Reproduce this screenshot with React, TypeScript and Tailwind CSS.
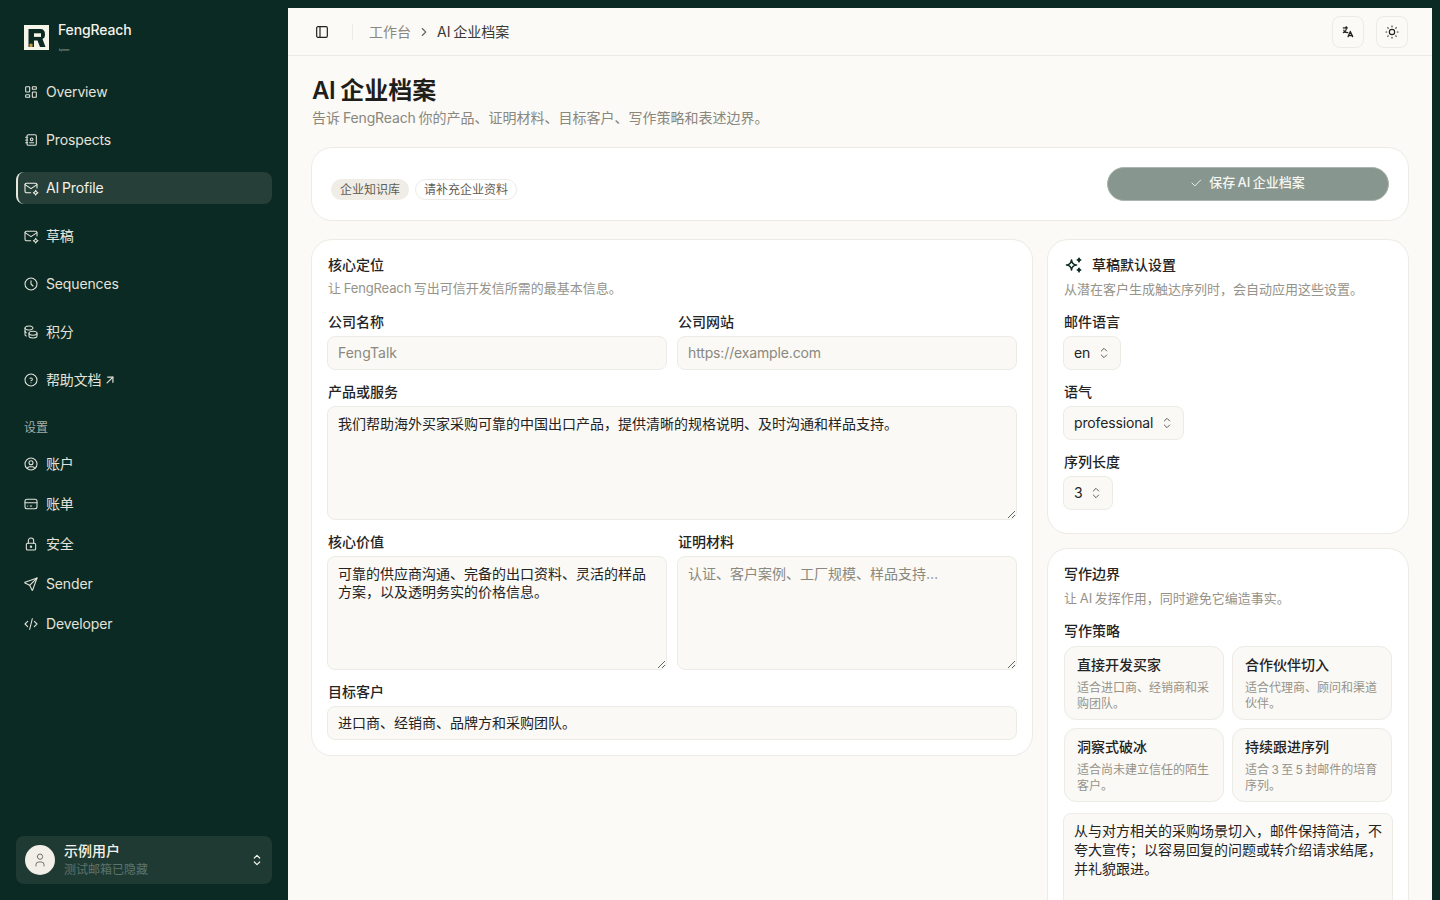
import React from "react";
import {
  TbLayoutDashboard, TbAddressBook, TbMailSpark, TbClock, TbCoins, TbHelpCircle, TbUserCircle,
  TbCreditCard, TbLock, TbSend, TbCode, TbLayoutSidebar, TbLanguage, TbSun, TbCheck, TbSparkles,
  TbSelector, TbUser, TbChevronRight, TbArrowUpRight,
} from "react-icons/tb";

const FONT = "font-['Inter','Noto_Sans_CJK_SC',sans-serif]";

function NavItem({ icon: Icon, label, active, extra }: { icon: any; label: string; active?: boolean; extra?: React.ReactNode }) {
  return (
    <div className={active
      ? "flex h-8 items-center gap-[7px] rounded-lg border-l-2 border-[#e8e6dd] bg-[#263f38] pl-[5px] text-sm text-[#f4f2ea]"
      : "flex h-8 items-center gap-[7px] rounded-lg pl-[7px] text-sm text-[#e4e3da]"}>
      <Icon className="size-4 shrink-0" strokeWidth={1.6} />
      <span className="tracking-[-0.01em]">{label}</span>
      {extra}
    </div>
  );
}

function Field({ label, children, className }: { label: string; children: React.ReactNode; className?: string }) {
  return (
    <div className={`flex flex-col gap-1 ${className ?? ""}`}>
      <div className="h-5 pl-px text-sm leading-5 font-medium text-[#24231f]">{label}</div>
      {children}
    </div>
  );
}

const inputCls = "h-[34px] w-full rounded-lg border border-[#ecebe5] bg-[#faf9f5] px-[10px] pb-[2px] text-sm text-[#24231f] outline-none placeholder:text-[#8b887e]";
const areaCls = "block h-[114px] w-full rounded-lg border border-[#ecebe5] bg-[#faf9f5] px-[10px] py-2 text-sm leading-[18px] text-[#24231f] outline-none placeholder:text-[#8b887e]";
const cardCls = "rounded-[20px] bg-white shadow-[0_0_0_1px_#ecebe5]";

function Select({ value, tight }: { value: string; tight?: boolean }) {
  return (
    <div className={tight
      ? "flex h-[34px] w-fit items-center gap-[5px] rounded-lg border border-[#ecebe5] bg-[#faf9f5] pr-2 pl-[10px] text-sm text-[#24231f]"
      : "flex h-[34px] w-fit items-center gap-[6px] rounded-lg border border-[#ecebe5] bg-[#faf9f5] pr-2 pl-[10px] text-sm text-[#24231f]"}>
      <span className="tracking-[-0.01em]">{value}</span>
      <TbSelector className="size-4 text-[#5f5d55]" strokeWidth={1.5} />
    </div>
  );
}

function Strategy({ title, desc }: { title: string; desc: string }) {
  return (
    <div className="h-[74px] rounded-xl border border-[#ecebe5] bg-[#faf9f5] px-3 pt-2">
      <div className="text-sm leading-5 font-medium text-[#24231f]">{title}</div>
      <div className="mt-[5px] text-xs leading-4 text-[#96938a]">{desc}</div>
    </div>
  );
}

function Logo() {
  return (
    <svg width="25" height="25" viewBox="0 0 25 25" className="shrink-0">
      <rect width="25" height="25" fill="#f7f4ea" />
      <path d="M4.5 4H16.5Q21 4 21 9.5Q21 13 18.5 14L21.5 22H16L13.5 15.5H10V22H4.5Z" fill="#0c2a24" />
      <rect x="10" y="8.3" width="7" height="3.6" fill="#f7f4ea" />
      <rect x="5.5" y="18.7" width="3" height="3.3" fill="#c9973f" />
    </svg>
  );
}

export default function App() {
  return (
    <div className={`flex h-screen w-full overflow-hidden bg-[#0c2a24] pt-2 pr-2 [word-spacing:-1px] ${FONT}`}>
      <aside className="-mt-2 flex h-screen w-[288px] shrink-0 flex-col px-4">
        <div className="flex h-[68px] items-start gap-[9px] pt-[21px] pl-2">
          <div className="pt-[4px]"><Logo /></div>
          <div className="flex flex-col">
            <span className="text-sm leading-[18px] font-medium tracking-[-0.01em] text-[#f4f2ea]">FengReach</span>
            <span className="mt-[10px] pl-px text-[3px] leading-[3px] text-[#a8b3ad]">by team</span>
          </div>
        </div>
        <nav className="mt-2 flex flex-col gap-4">
          <NavItem icon={TbLayoutDashboard} label="Overview" />
          <NavItem icon={TbAddressBook} label="Prospects" />
          <NavItem icon={TbMailSpark} label="AI Profile" active />
          <NavItem icon={TbMailSpark} label="草稿" />
          <NavItem icon={TbClock} label="Sequences" />
          <NavItem icon={TbCoins} label="积分" />
          <NavItem icon={TbHelpCircle} label="帮助文档" extra={<TbArrowUpRight className="-ml-[5px] size-[14px]" />} />
        </nav>
        <div className="mt-6 pl-2 text-xs leading-4 text-[#a3aea8]">设置</div>
        <nav className="mt-3 flex flex-col gap-2">
          <NavItem icon={TbUserCircle} label="账户" />
          <NavItem icon={TbCreditCard} label="账单" />
          <NavItem icon={TbLock} label="安全" />
          <NavItem icon={TbSend} label="Sender" />
          <NavItem icon={TbCode} label="Developer" />
        </nav>
        <div className="mt-auto mb-4 flex h-12 items-center rounded-lg bg-[#1f3a33] pr-[7px] pl-[9px]">
          <div className="flex size-[30px] items-center justify-center rounded-full bg-[#f1efe8] text-[#6b685f]">
            <TbUser className="size-4" strokeWidth={1.4} />
          </div>
          <div className="-mt-px ml-[9px] flex flex-1 flex-col gap-[2px]">
            <span className="text-sm leading-[18px] font-medium text-[#f4f2ea]">示例用户</span>
            <span className="text-xs leading-4 text-[#5e736c]">测试邮箱已隐藏</span>
          </div>
          <TbSelector className="size-4 text-[#f4f2ea]" strokeWidth={1.8} />
        </div>
      </aside>

      <main className="flex min-w-0 flex-1 flex-col overflow-hidden bg-[#fbfaf6]">
        <header className="flex h-12 shrink-0 items-center border-b border-[#ecebe5] pr-6 pl-[26px]">
          <TbLayoutSidebar className="size-4 text-[#24231f]" strokeWidth={1.8} />
          <div className="mr-4 ml-[22px] h-4 w-px bg-[#ecebe5]" />
          <span className="text-sm text-[#8a877d]">工作台</span>
          <TbChevronRight className="mx-[6px] size-[14px] text-[#6b685f]" />
          <span className="text-sm text-[#3a3933]">AI 企业档案</span>
          <div className="ml-auto flex gap-3">
            <div className="flex size-8 items-center justify-center rounded-lg border border-[#ecebe5] text-[#24231f]"><TbLanguage className="size-[14px]" strokeWidth={2.2} /></div>
            <div className="flex size-8 items-center justify-center rounded-lg border border-[#ecebe5] text-[#24231f]"><TbSun className="size-4" strokeWidth={1.7} /></div>
          </div>
        </header>

        <div className="flex flex-col px-6 pt-[19px]">
          <h1 className="text-2xl leading-8 font-semibold text-[#1f1e1a] [word-spacing:-1px]"><span className="tracking-[-0.02em]">AI</span> 企业档案</h1>
          <p className="mt-px text-sm leading-5 text-[#8a877d]">告诉 <span className="tracking-[-0.01em]">FengReach</span> 你的产品、证明材料、目标客户、写作策略和表述边界。</p>

          <section className={`mt-5 flex h-[72px] items-center px-[19px] ${cardCls}`}>
            <div className="mt-[11px] flex gap-[6px]">
              <span className="flex h-[21px] items-center rounded-full border border-transparent bg-[#efede6] px-2 text-xs text-[#5f5d55]">企业知识库</span>
              <span className="flex h-[21px] items-center rounded-full border border-[#ecebe5] px-2 text-xs text-[#5f5d55]">请补充企业资料</span>
            </div>
            <button className="ml-auto flex h-[34px] w-[282px] items-center justify-center gap-[6px] rounded-full border border-[#aab5af] bg-[#87968f] pr-[2px] pb-[2px] text-[13px] font-medium text-[#f7f6f0] [word-spacing:-1px]">
              <TbCheck className="size-[14px]" strokeWidth={1.6} />保存 AI 企业档案
            </button>
          </section>

          <div className="mt-5 grid grid-cols-[720px_360px] items-start gap-4">
            <section className={`flex flex-col gap-3 px-[15px] pt-[15px] pb-[15px] ${cardCls}`}>
              <div className="mb-[2px] pl-px">
                <div className="text-sm leading-5 font-medium text-[#24231f]">核心定位</div>
                <div className="mt-[3px] text-[13px] leading-5 text-[#96938a]">让 <span className="tracking-[-0.01em]">FengReach</span> 写出可信开发信所需的最基本信息。</div>
              </div>
              <div className="grid grid-cols-2 gap-[10px]">
                <Field label="公司名称"><input className={inputCls} placeholder="FengTalk" /></Field>
                <Field label="公司网站"><input className={`${inputCls} placeholder:tracking-[-0.01em]`} placeholder="https://example.com" /></Field>
              </div>
              <Field label="产品或服务">
                <textarea className={areaCls} defaultValue="我们帮助海外买家采购可靠的中国出口产品，提供清晰的规格说明、及时沟通和样品支持。" />
              </Field>
              <div className="grid grid-cols-2 gap-[10px]">
                <Field label="核心价值">
                  <textarea className={areaCls} defaultValue="可靠的供应商沟通、完备的出口资料、灵活的样品方案，以及透明务实的价格信息。" />
                </Field>
                <Field label="证明材料">
                  <textarea className={areaCls} placeholder="认证、客户案例、工厂规模、样品支持…" />
                </Field>
              </div>
              <Field label="目标客户"><input className={inputCls} defaultValue="进口商、经销商、品牌方和采购团队。" /></Field>
            </section>

            <div className="flex flex-col gap-4">
              <section className={`flex flex-col gap-3 px-[15px] pt-[15px] pb-[23px] ${cardCls}`}>
                <div className="mb-px pl-px">
                  <div className="flex items-center gap-2 text-sm leading-5 font-medium text-[#24231f]">
                    <TbSparkles className="size-5 text-[#0c2a24]" strokeWidth={2} />草稿默认设置
                  </div>
                  <div className="mt-[4px] text-[13px] leading-5 text-[#96938a]">从潜在客户生成触达序列时，会自动应用这些设置。</div>
                </div>
                <Field label="邮件语言"><Select value="en" /></Field>
                <Field label="语气"><Select value="professional" /></Field>
                <Field label="序列长度"><Select value="3" tight /></Field>
              </section>

              <section className={`flex flex-col px-[15px] pt-[15px] ${cardCls}`}>
                <div className="pl-px">
                  <div className="text-sm leading-5 font-medium text-[#24231f]">写作边界</div>
                  <div className="mt-[4px] text-[13px] leading-5 text-[#96938a]">让 AI 发挥作用，同时避免它编造事实。</div>
                </div>
                <div className="mt-[13px] h-5 pl-px text-sm leading-5 font-medium text-[#24231f]">写作策略</div>
                <div className="mt-[5px] grid grid-cols-2 gap-2 px-px">
                  <Strategy title="直接开发买家" desc="适合进口商、经销商和采购团队。" />
                  <Strategy title="合作伙伴切入" desc="适合代理商、顾问和渠道伙伴。" />
                  <Strategy title="洞察式破冰" desc="适合尚未建立信任的陌生客户。" />
                  <Strategy title="持续跟进序列" desc="适合 3 至 5 封邮件的培育序列。" />
                </div>
                <textarea className="mt-[11px] block h-[140px] w-full rounded-lg border border-[#ecebe5] bg-[#faf9f5] px-[10px] pt-[7px] pb-2 text-sm leading-[19px] text-[#24231f] outline-none" defaultValue="从与对方相关的采购场景切入，邮件保持简洁，不夸大宣传；以容易回复的问题或转介绍请求结尾，并礼貌跟进。" />
              </section>
            </div>
          </div>
        </div>
      </main>
    </div>
  );
}
